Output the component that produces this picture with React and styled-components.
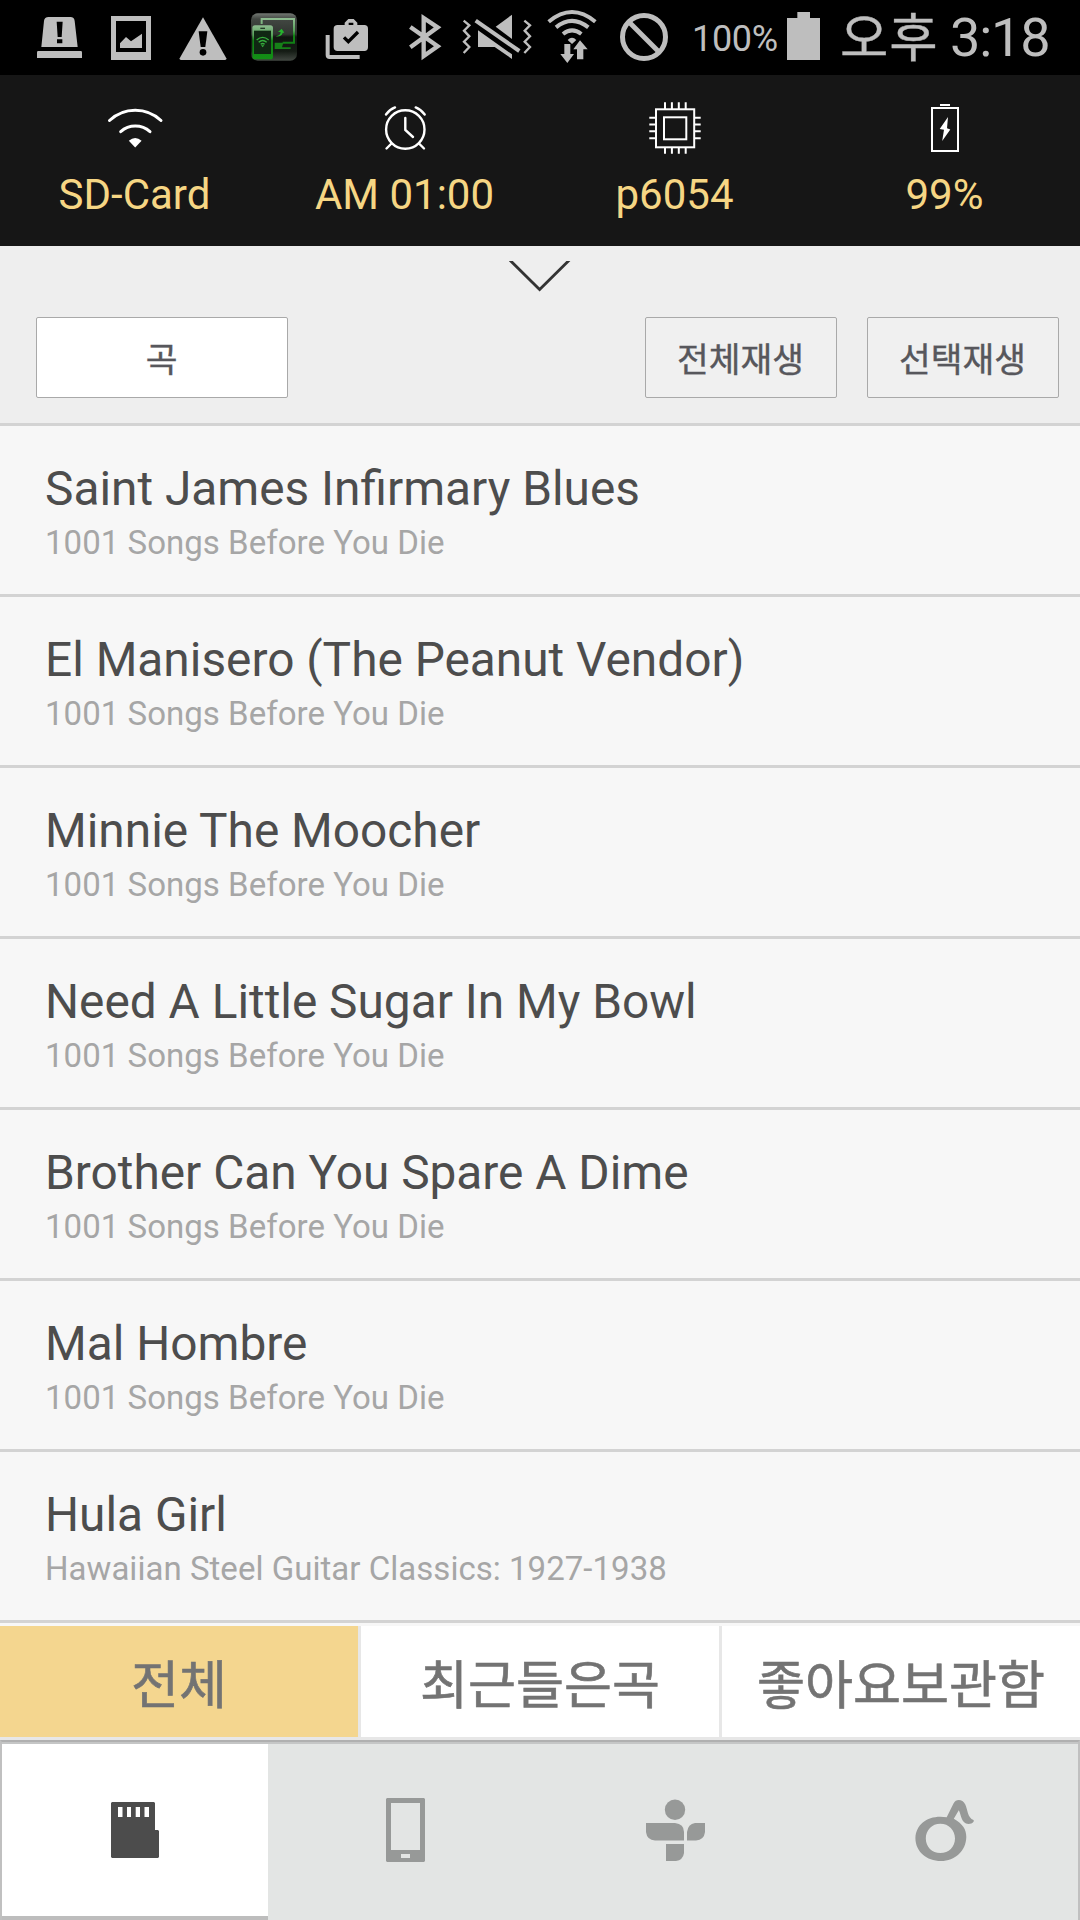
import React, { useState } from 'react';
import styled, { createGlobalStyle } from 'styled-components';

const GlobalStyle = createGlobalStyle`
  * {
    box-sizing: border-box;
  }

  body {
    margin: 0;
    background: #f7f7f7;
    font-family: Roboto, 'Noto Sans CJK KR', sans-serif;
  }
`;

const Screen = styled.div`
  display: flex;
  flex-direction: column;
  width: 1080px;
  height: 1920px;
  overflow: hidden;
  background: #f7f7f7;
`;

const StatusBar = styled.div`
  display: flex;
  align-items: flex-start;
  flex: none;
  height: 75px;
  background: #000;
  color: #bebebe;
`;

const StatusIcon = styled.svg`
  flex: none;
  width: ${({ $w }) => $w}px;
  height: 75px;
  margin-left: ${({ $gap }) => $gap}px;
`;

const BatteryText = styled.span`
  flex: none;
  width: 84px;
  margin-left: 24px;
  font-size: 36px;
  line-height: 79px;
  letter-spacing: -0.3px;
  white-space: nowrap;
`;

const Clock = styled.div`
  display: flex;
  flex: none;
  margin-left: 20px;
  font-size: 54px;
  line-height: 75px;
  letter-spacing: -1.2px;
  white-space: nowrap;
`;

const Meridiem = styled.span`
  width: 110px;
  font-size: 52.5px;
  line-height: 78px;
  letter-spacing: 1px;
  -webkit-text-stroke: 0.4px #bebebe;
`;

const InfoBar = styled.div`
  display: grid;
  grid-template-columns: repeat(4, 1fr);
  flex: none;
  height: 171px;
  padding-top: 25px;
  background: #161616;
`;

const InfoItem = styled.div`
  display: flex;
  flex-direction: column;
  align-items: center;
`;

const InfoLabel = styled.span`
  margin-top: 10px;
  padding-right: 1px;
  color: #f6d684;
  font-size: 42px;
  line-height: 50px;
`;

const Toolbar = styled.div`
  display: flex;
  flex-direction: column;
  flex: none;
  height: 180px;
  background: #eee;
  border-bottom: 3px solid #d3d3d3;
`;

const ChevronRow = styled.div`
  display: flex;
  justify-content: center;
  height: 71px;
  padding-top: 15px;
`;

const ButtonRow = styled.div`
  display: flex;
  gap: 30px;
  padding: 0 21px 0 36px;
`;

const Button = styled.button`
  width: ${({ $wide }) => ($wide ? 252 : 192)}px;
  height: 81px;
  margin: 0 ${({ $wide }) => ($wide ? 'auto' : '0')} 0 0;
  padding: 0 1px 2px 0;
  border: 1px solid #a9a9a9;
  border-radius: 2px;
  background: ${({ $wide }) => ($wide ? '#fff' : '#f0f0f0')};
  color: #57575c;
  font-family: 'Noto Sans CJK KR', sans-serif;
  font-size: 34.5px;
  -webkit-text-stroke: 0.4px #57575c;
`;

const SongList = styled.ul`
  flex: 1;
  margin: 0;
  padding: 0;
  list-style: none;
`;

const SongRow = styled.li`
  height: 171px;
  padding: 35px 45px 0;
  border-bottom: 3px solid #d3d3d3;
`;

const SongTitle = styled.div`
  color: #4d4d4d;
  font-size: 47.8px;
  line-height: 56px;
`;

const SongAlbum = styled.div`
  margin-top: 6px;
  color: #a6a6a6;
  font-size: 33px;
  line-height: 40px;
  letter-spacing: 0.03px;
`;

const Tabs = styled.div`
  display: grid;
  grid-template-columns: repeat(3, 1fr);
  gap: 3px;
  flex: none;
  height: 114px;
  background: #e7e7e7;
  border-bottom: 3px solid #e7e7e7;
`;

const Tab = styled.button`
  margin: 0;
  padding: 0 0 1px;
  border: none;
  background: ${({ $active }) => ($active ? '#f4d68f' : '#fff')};
  color: #737373;
  font-family: 'Noto Sans CJK KR', sans-serif;
  font-size: 52.2px;
  white-space: nowrap;
  -webkit-text-stroke: 0.6px #737373;
`;

const BottomNav = styled.div`
  display: grid;
  grid-template-columns: 266px 273px 267px 270px;
  flex: none;
  height: 180px;
  border: 2px solid #c0c0c0;
  border-top: 2px solid #b0b0b0;
  border-bottom: none;
  background: #e3e5e4;
  box-shadow: inset 0 2px 0 #c5c6c6;
`;

const NavItem = styled.button`
  display: flex;
  align-items: center;
  justify-content: center;
  margin: ${({ $active }) => ($active ? '2px 0 0' : '0')};
  padding: ${({ $active }) => ($active ? '0 0 2px' : '0')};
  border: none;
  border-bottom: 4px solid ${({ $active }) => ($active ? '#bdbdbd' : 'transparent')};
  background: ${({ $active }) => ($active ? '#fff' : 'transparent')};
  color: ${({ $active }) => ($active ? '#4c4c4c' : '#979998')};

  &:last-child {
    padding-left: 2px;
  }
`;

const songs = [
  { title: 'Saint James Infirmary Blues', album: '1001 Songs Before You Die' },
  { title: 'El Manisero (The Peanut Vendor)', album: '1001 Songs Before You Die' },
  { title: 'Minnie The Moocher', album: '1001 Songs Before You Die' },
  { title: 'Need A Little Sugar In My Bowl', album: '1001 Songs Before You Die' },
  { title: 'Brother Can You Spare A Dime', album: '1001 Songs Before You Die' },
  { title: 'Mal Hombre', album: '1001 Songs Before You Die' },
  { title: 'Hula Girl', album: 'Hawaiian Steel Guitar Classics: 1927-1938' },
];

const tabs = ['전체', '최근들은곡', '좋아요보관함'];

// Status icons are drawn on a grid of 3 units per pixel
const StatusIcons = () => (
  <>
    <StatusIcon $w={45} $gap={37} viewBox="111 0 135 225" fill="#bebebe">
      <path d="M124 141 L132 63 Q133 51 146 51 H211 Q223 51 224 63 L233 141 Z" />
      <path d="M111 174 V157 Q111 153 115 153 H242 Q246 153 246 157 V174 Z" />
      <path d="M170 65 H188 L185 111 H173 Z M171 118 H187 V130 H171 Z" fill="#000" />
    </StatusIcon>
    <StatusIcon $w={40} $gap={29} viewBox="333 0 120 225" fill="#bebebe">
      <path fillRule="evenodd" d="M333 48 H453 V180 H333 Z M348 63 V156 H438 V63 Z" />
      <path d="M360 144 V130 L378 111 L393 124 L426 101 V144 Z" />
    </StatusIcon>
    <StatusIcon $w={48} $gap={28} viewBox="537 0 144 225" fill="#bebebe">
      <path d="M609 52 L679 175 Q680 180 675 180 H543 Q538 180 539 175 Z" />
      <path d="M596 94 H622 L616 141 H602 Z" fill="#000" />
      <circle cx="609" cy="157" r="10" fill="#000" />
    </StatusIcon>
    <StatusIcon $w={48} $gap={23} viewBox="750 0 144 225">
      <defs>
        <linearGradient id="appBg" x1="0" y1="0" x2="0" y2="1">
          <stop offset="0" stopColor="#737873" />
          <stop offset="0.12" stopColor="#424742" />
          <stop offset="0.44" stopColor="#303530" />
          <stop offset="0.5" stopColor="#101510" />
          <stop offset="0.8" stopColor="#151c15" />
          <stop offset="1" stopColor="#424842" />
        </linearGradient>
        <linearGradient id="appPhone" x1="0" y1="0" x2="0" y2="1">
          <stop offset="0" stopColor="#8dbb8f" />
          <stop offset="0.3" stopColor="#55a258" />
          <stop offset="0.45" stopColor="#118015" />
          <stop offset="1" stopColor="#139016" />
        </linearGradient>
        <linearGradient id="appScreen" x1="0" y1="0" x2="0" y2="1">
          <stop offset="0" stopColor="#8dbb8f" />
          <stop offset="0.5" stopColor="#55a258" />
          <stop offset="0.7" stopColor="#118015" />
        </linearGradient>
      </defs>
      <rect x="753" y="40" width="138" height="142" rx="20" fill="url(#appBg)" />
      <path d="M785 72 V57 H882 V128 H848" fill="none" stroke="url(#appScreen)" strokeWidth="6" />
      <path d="M824 128 H850 L846 142 H872 V147 H824 Z" fill="#168018" />
      <path d="M827 109 Q841 107 842 96 H834 L845 86 L853 98 H848 Q845 111 827 109 Z" fill="#26b52e" />
      <rect x="757" y="76" width="62" height="102" rx="8" fill="url(#appPhone)" />
      <rect x="762" y="92" width="51" height="70" fill="#102713" />
      <rect x="781" y="83" width="14" height="4" fill="#263c28" />
      <path d="M770 120 Q788 104 806 120 M776 127 Q788 116 800 127 M782 133 Q788 128 794 133" fill="none" stroke="#35ad3c" strokeWidth="4" />
      <path d="M783 136 L788 142 L793 136 Z" fill="#35ad3c" />
    </StatusIcon>
    <StatusIcon $w={43} $gap={27} viewBox="976 0 129 225" fill="#bebebe">
      <path d="M978 105 H990 V165 H1080 V177 H990 Q978 177 978 165 Z" />
      <path fillRule="evenodd" d="M1014 75 H1035 V68 L1046 57 H1062 L1073 68 V75 H1094 Q1105 75 1105 86 V142 Q1105 153 1094 153 H1014 Q1002 153 1002 142 V86 Q1002 75 1014 75 Z M1047 75 H1061 V68 H1047 Z" />
      <path d="M1033 112 L1046 125 L1075 96" fill="none" stroke="#000" strokeWidth="10" />
    </StatusIcon>
    <StatusIcon $w={33} $gap={41} viewBox="88 0 99 225" fill="none" stroke="#bebebe" strokeWidth="13">
      <path d="M92 81 L174 139 L132 168 V54 L174 82 L92 142" />
    </StatusIcon>
    <StatusIcon $w={70} $gap={20} viewBox="246 0 210 225" fill="#bebebe">
      <path d="M251 62 L268 76 L252 92 L268 109 L252 125 L268 141 L251 159 M433 62 L450 76 L434 92 L450 109 L434 125 L450 141 L433 159" fill="none" stroke="#bebebe" strokeWidth="7" />
      <path d="M396 44 V117 L347 80 Z M294 91 L396 163 V177 L344 141 H294 Z" />
      <path d="M287 62 L418 153" stroke="#bebebe" strokeWidth="12" />
    </StatusIcon>
    <StatusIcon $w={50} $gap={15} viewBox="501 0 150 225" fill="#bebebe">
      <path d="M506 65 Q576 7 646 65 M528 82 Q576 43 625 82 M549 102 Q576 80 604 102" fill="none" stroke="#bebebe" strokeWidth="12" />
      <path d="M563 120 Q576 106 589 120 L576 132 Z" />
      <path d="M600 121 L623 148 H610 V178 H591 V148 H580 Z" stroke="#000" strokeWidth="4" paintOrder="stroke" />
      <path d="M553 132 H571 V162 H582 L562 189 L541 162 H553 Z" />
    </StatusIcon>
    <StatusIcon $w={48} $gap={23} viewBox="720 0 144 225" fill="none" stroke="#bebebe" strokeWidth="15">
      <circle cx="792" cy="111" r="64.5" />
      <path d="M747 66 L837 156" />
    </StatusIcon>
    <BatteryText>100%</BatteryText>
    <StatusIcon $w={33} $gap={11} viewBox="141 0 99 225" fill="#bebebe">
      <path d="M172 36 H210 V54 H240 V180 H141 V54 H172 Z" />
    </StatusIcon>
  </>
);

const WifiIcon = () => (
  <svg width="60" height="60" viewBox="105 100 60 60" fill="none" stroke="#fff" strokeWidth="3" strokeLinecap="round">
    <path d="M109.5 120.5 A37.4 37.4 0 0 1 161 120.5" />
    <path d="M120.7 131.7 A22 22 0 0 1 150 131.7" />
    <path d="M128.8 140.7 Q135.2 135.5 141.6 140.7 L135.2 147.5 Z" fill="#fff" stroke="none" />
  </svg>
);

const AlarmIcon = () => (
  <svg width="60" height="60" viewBox="375 100 60 60" fill="none" stroke="#fff" strokeWidth="2.4" strokeLinecap="round">
    <circle cx="405.3" cy="129.5" r="19.2" />
    <path d="M405.3 118 V130 L413 137" />
    <path d="M386 114.5 Q389.5 109.5 395 107.4 M424.7 114.5 Q421 109.5 415.7 107.4" />
    <path d="M391.5 143.5 L386.5 148.5 M419 143.5 L424 148.5" />
  </svg>
);

const ChipIcon = () => (
  <svg width="60" height="60" viewBox="645 100 60 60" fill="none" stroke="#fff" strokeWidth="2">
    <rect x="656" y="109.3" width="38.2" height="38" />
    <rect x="664" y="117.3" width="22.3" height="22" />
    <path d="M665 102.3 V109 M671.9 102.3 V109 M678.8 102.3 V109 M685.7 102.3 V109" />
    <path d="M665 147.5 V153.7 M671.9 147.5 V153.7 M678.8 147.5 V153.7 M685.7 147.5 V153.7" />
    <path d="M649.3 117.7 H656 M649.3 124.4 H656 M649.3 131.3 H656 M649.3 138.2 H656" />
    <path d="M694 117.7 H700.7 M694 124.4 H700.7 M694 131.3 H700.7 M694 138.2 H700.7" />
  </svg>
);

const ChargeIcon = () => (
  <svg width="60" height="60" viewBox="915 100 60 60" fill="#fff">
    <rect x="932" y="108" width="26" height="43" fill="none" stroke="#fff" strokeWidth="2" />
    <rect x="940" y="104" width="10" height="2" />
    <path d="M948 117 L939.7 129 L944 129.8 L942.2 141 L950.3 129.5 L947 128.3 Z" />
  </svg>
);

const infoItems = [
  { label: 'SD-Card', Icon: WifiIcon },
  { label: 'AM 01:00', Icon: AlarmIcon },
  { label: 'p6054', Icon: ChipIcon },
  { label: '99%', Icon: ChargeIcon },
];

const SdCardIcon = () => (
  <svg width="70" height="70" viewBox="100 1794 70 70" fill="currentColor">
    <path fillRule="evenodd" d="M112 1802 H154 L155 1803 V1830 H158 L159 1831 V1857 L158 1858 H112 L111 1857 V1803 Z M118 1807 V1817 H122.5 V1807 Z M127 1807 V1817 H131 V1807 Z M135.7 1807 V1817 H140 V1807 Z M144.5 1807 V1817 H149 V1807 Z" />
  </svg>
);

const PhoneIcon = () => (
  <svg width="70" height="70" viewBox="370 1794 70 70" fill="currentColor">
    <path fillRule="evenodd" d="M387 1798 H424 L425 1799 V1861 L424 1862 H387 L386 1861 V1799 Z M391 1803 V1850 H420 V1803 Z M401 1854 V1858 H410 V1854 Z" />
  </svg>
);

const TuneInIcon = () => (
  <svg width="70" height="70" viewBox="640 1794 70 70" fill="currentColor">
    <circle cx="675" cy="1809.8" r="10.2" />
    <path d="M646 1823 H675 Q684 1824 684 1832 V1840.5 H655 Q647 1840 646 1832 Z" />
    <path d="M687 1840.5 V1832 Q688 1824 695 1823 H705 V1832 Q704 1840 696 1840.5 Z" />
    <path d="M666 1844 H684 V1853 Q683 1860 676 1861 H666 Z" />
  </svg>
);

const NoteIcon = () => (
  <svg width="70" height="70" viewBox="910 1794 70 70" fill="currentColor">
    <path fillRule="evenodd" d="M947.7 1817.3 L954.5 1803.5 C957 1798.5 963.5 1799 966.3 1804.5 C968.5 1809 968.5 1818 974.5 1820 C975.5 1821 974 1823.8 969.5 1824 C962 1823.5 962.5 1815.5 959.8 1810.3 L954.8 1818.7 C964 1824 967.3 1829.5 967.3 1837 C967 1851 956 1861 942 1861 C927.5 1861 916.4 1851.5 916.4 1838 C917 1823 930.5 1814.5 947.7 1817.3 Z M941.3 1823.7 C933 1823.7 926.8 1830 926.8 1838.5 C926.8 1847 933 1853 941.3 1853 C949.8 1853 956 1847 956 1838.5 C956 1830 949.8 1823.7 941.3 1823.7 Z" />
  </svg>
);

const navItems = [
  { id: 'sd', Icon: SdCardIcon },
  { id: 'phone', Icon: PhoneIcon },
  { id: 'tunein', Icon: TuneInIcon },
  { id: 'note', Icon: NoteIcon },
];

const App = () => {
  const [activeTab, setActiveTab] = useState(0);
  const [activeNav, setActiveNav] = useState('sd');

  return (
    <Screen>
      <GlobalStyle />
      <StatusBar>
        <StatusIcons />
        <Clock>
          <Meridiem>오후</Meridiem>
          <span>3:18</span>
        </Clock>
      </StatusBar>
      <InfoBar>
        {infoItems.map(({ label, Icon }) => (
          <InfoItem key={label}>
            <Icon />
            <InfoLabel>{label}</InfoLabel>
          </InfoItem>
        ))}
      </InfoBar>
      <Toolbar>
        <ChevronRow>
          <svg width="62" height="32" viewBox="0 0 62 32" fill="none" stroke="#333" strokeWidth="2.8">
            <path d="M0.8 -1 L30.6 28.6 L60.4 -1" />
          </svg>
        </ChevronRow>
        <ButtonRow>
          <Button $wide>곡</Button>
          <Button>전체재생</Button>
          <Button>선택재생</Button>
        </ButtonRow>
      </Toolbar>
      <SongList>
        {songs.map((song) => (
          <SongRow key={song.title}>
            <SongTitle>{song.title}</SongTitle>
            <SongAlbum>{song.album}</SongAlbum>
          </SongRow>
        ))}
      </SongList>
      <Tabs>
        {tabs.map((tab, i) => (
          <Tab key={tab} $active={i === activeTab} onClick={() => setActiveTab(i)}>
            {tab}
          </Tab>
        ))}
      </Tabs>
      <BottomNav>
        {navItems.map(({ id, Icon }) => (
          <NavItem key={id} $active={id === activeNav} onClick={() => setActiveNav(id)}>
            <Icon />
          </NavItem>
        ))}
      </BottomNav>
    </Screen>
  );
};

export default App;
